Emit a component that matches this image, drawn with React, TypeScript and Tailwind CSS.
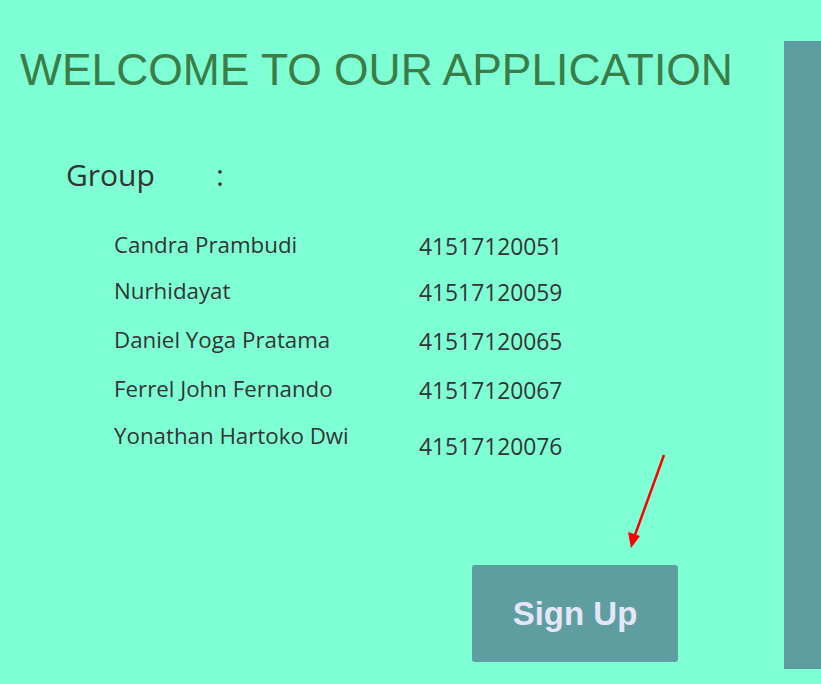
const members = [
  { name: "Candra Prambudi", nim: "41517120051", mt: "mt-0", nimPt: "pt-[4px]" },
  { name: "Nurhidayat", nim: "41517120059", mt: "mt-[18px]", nimPt: "pt-[4px]" },
  { name: "Daniel Yoga Pratama", nim: "41517120065", mt: "mt-[21px]", nimPt: "pt-[4px]" },
  { name: "Ferrel John Fernando", nim: "41517120067", mt: "mt-[21px]", nimPt: "pt-[4px]" },
  { name: "Yonathan Hartoko Dwi", nim: "41517120076", mt: "mt-[19px]", nimPt: "pt-[13px]" },
];

export default function App() {
  return (
    <div className="relative flex h-[684px] w-[821px] overflow-hidden bg-[#7FFFD4]">
      <div className="flex-1">
        <h1 className="ml-[20px] mt-[47px] font-['Liberation_Sans',Arial,sans-serif] text-[44.4px] leading-[46px] text-[#3a7d48]">
          WELCOME TO OUR APPLICATION
        </h1>

        <div className="ml-[66px] mt-[64px] flex items-baseline font-['Open_Sans','Noto_Sans',sans-serif] text-[30px] leading-[36px] text-[#333]">
          <span className="w-[150px]">Group</span>
          <span>:</span>
        </div>

        <div className="ml-[114px] mt-[38px] font-['Open_Sans','Noto_Sans',sans-serif] text-[#333]">
          {members.map((m) => (
            <div key={m.nim} className={`flex items-start ${m.mt}`}>
              <span className="w-[305px] text-[22.3px] leading-[28px]">{m.name}</span>
              <span className={`text-[22.8px] leading-[24px] ${m.nimPt}`}>{m.nim}</span>
            </div>
          ))}
        </div>

        <div className="ml-[472px] mt-[106px]">
          <button className="h-[97px] w-[206px] rounded-[3px] bg-[#5F9EA0] font-['Liberation_Sans',Arial,sans-serif] text-[33px] font-bold text-[#E6E6FA]">
            Sign Up
          </button>
        </div>
      </div>

      <div className="mt-[41px] h-[628px] w-[37px] bg-[#5F9EA0]" />

      <svg
        className="absolute left-[620px] top-[450px]"
        width="50"
        height="105"
        viewBox="0 0 50 105"
      >
        <line x1="44" y1="5" x2="15" y2="85" stroke="#ff0000" strokeWidth="2.5" />
        <polygon points="11,98 8,82 20,86" fill="#ff0000" />
      </svg>
    </div>
  );
}
